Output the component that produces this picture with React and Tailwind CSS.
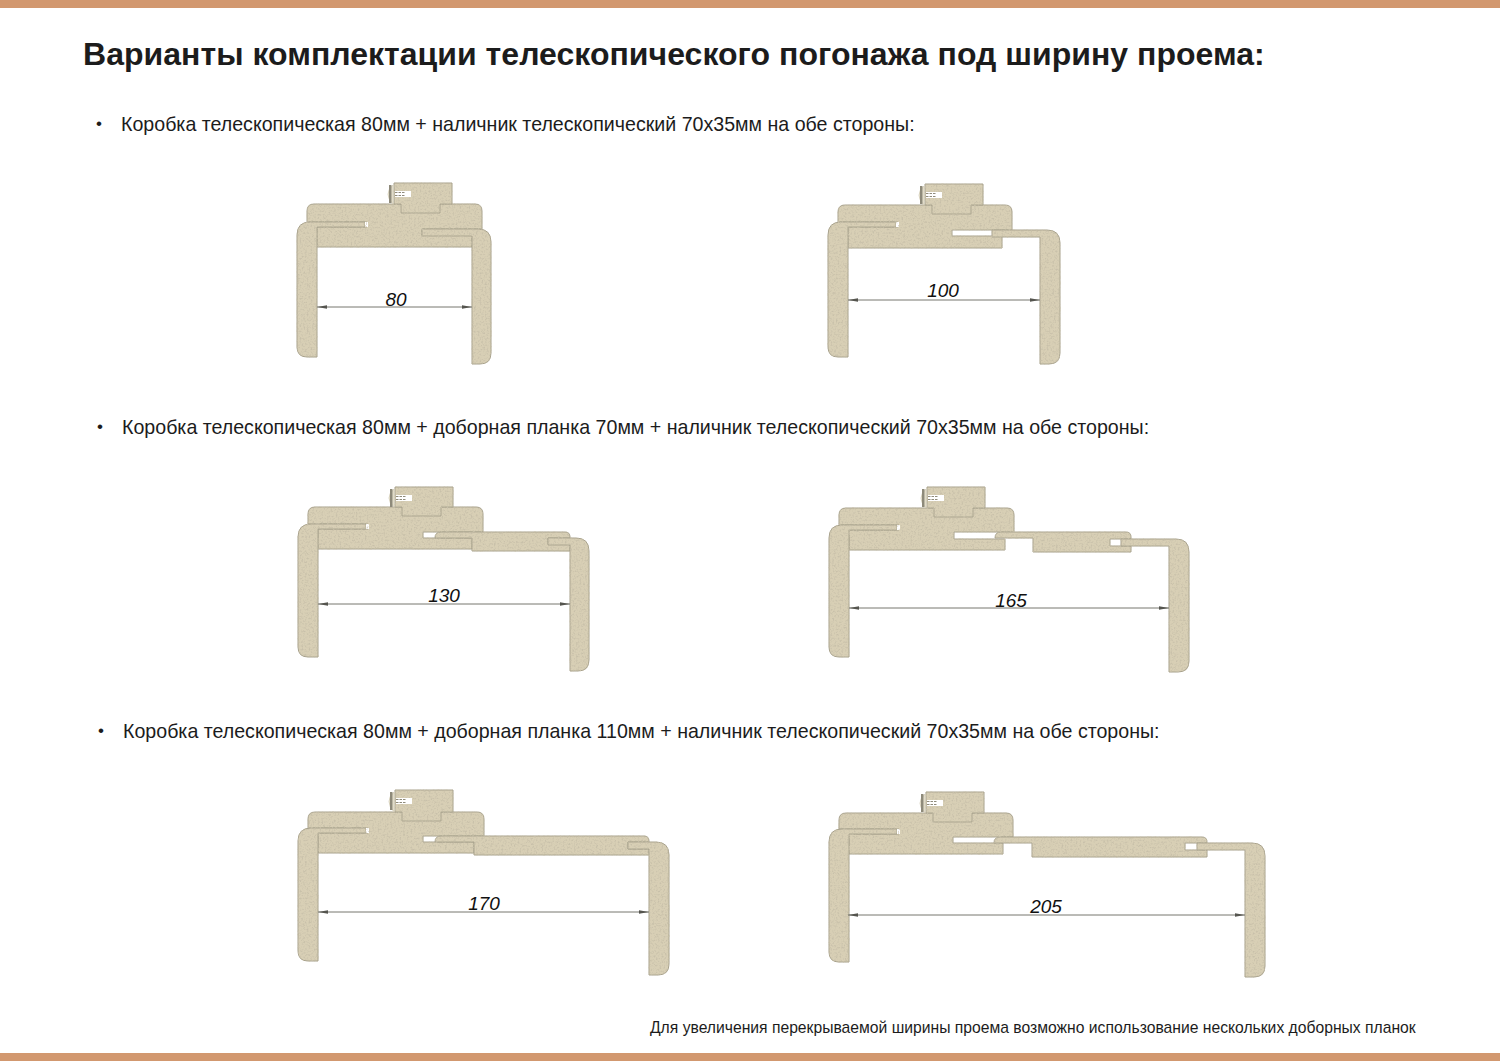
const F = '#d8cfb5';
const LINE = '#a8a28d';

// measured profile positions, all in page pixels
const rows = [
  [
    { L: 297, T: 204, fb: 247, frb: 472, fr: 482, sx: 422, sy: 229, sb: 235, stopX: 394, stopY: 183, lt: 222, lb: 357,
      c: { tx: 422, inner: 472, outer: 491, rt: 229, rb: 364 },
      arrow: { y: 307, x1: 317, x2: 472 }, label: { x: 396, y: 306, t: '80' } },
    { L: 828, T: 205, fb: 248, frb: 1002, fr: 1012, sx: 952, sy: 230, sb: 236, stopX: 925, stopY: 184, lt: 222, lb: 357,
      c: { tx: 992, inner: 1040, outer: 1060, rt: 230, rb: 364 },
      arrow: { y: 300, x1: 848, x2: 1040 }, label: { x: 943, y: 297, t: '100' } },
  ],
  [
    { L: 298, T: 507, fb: 549, frb: 472, fr: 483, sx: 423, sy: 532, sb: 538, stopX: 395, stopY: 487, lt: 524, lb: 657,
      c: { tx: 548, inner: 570, outer: 589, rt: 538, rb: 671 },
      ext: { tip: 435, right: 570, top: 532, bottom: 551, body: 472, neck: 538, slot: 548, slotB: 544 },
      arrow: { y: 604, x1: 318, x2: 570 }, label: { x: 444, y: 602, t: '130' } },
    { L: 829, T: 508, fb: 550, frb: 1005, fr: 1014, sx: 954, sy: 532, sb: 539, stopX: 927, stopY: 487, lt: 525, lb: 657,
      c: { tx: 1121, inner: 1169, outer: 1189, rt: 539, rb: 672 },
      ext: { tip: 995, right: 1131, top: 532, bottom: 552, body: 1033, neck: 538, slot: 1110, slotB: 546 },
      arrow: { y: 608, x1: 849, x2: 1169 }, label: { x: 1011, y: 607, t: '165' } },
  ],
  [
    { L: 298, T: 812, fb: 853, frb: 474, fr: 484, sx: 423, sy: 836, sb: 842, stopX: 395, stopY: 790, lt: 828, lb: 961,
      c: { tx: 628, inner: 649, outer: 669, rt: 842, rb: 975 },
      ext: { tip: 435, right: 649, top: 836, bottom: 855, body: 474, neck: 842, slot: 628, slotB: 849 },
      arrow: { y: 912, x1: 318, x2: 649 }, label: { x: 484, y: 910, t: '170' } },
    { L: 829, T: 813, fb: 854, frb: 1003, fr: 1013, sx: 953, sy: 837, sb: 843, stopX: 926, stopY: 792, lt: 829, lb: 962,
      c: { tx: 1197, inner: 1245, outer: 1265, rt: 843, rb: 977 },
      ext: { tip: 994, right: 1207, top: 837, bottom: 857, body: 1032, neck: 843, slot: 1185, slotB: 850 },
      arrow: { y: 915, x1: 848, x2: 1245 }, label: { x: 1046, y: 913, t: '205' } },
  ],
];

function Profile({ d, id, x0, y0, w, h, className }) {
  const { L, T, fb, frb, fr, sx, sy, sb, stopX, stopY, lt, lb, c, ext, arrow, label } = d;
  const inner = L + 20;
  const fl = L + 10;
  const end = L + 70;

  const frame = `M${fl + 7} ${T}H${fr - 7}Q${fr} ${T} ${fr} ${T + 7}V${sy}H${sx}V${sb}H${frb}V${fb}H${inner}V${lt + 5}H${end}V${lt}H${fl}V${T + 7}Q${fl} ${T} ${fl + 7} ${T}Z`;
  const left = `M${L + 13} ${lt}H${end - 2}V${lt + 5}H${inner}V${lb}H${L + 10}Q${L} ${lb} ${L} ${lb - 10}V${lt + 13}Q${L} ${lt} ${L + 13} ${lt}Z`;
  const right = `M${c.tx} ${c.rt}H${c.outer - 13}Q${c.outer} ${c.rt} ${c.outer} ${c.rt + 13}V${c.rb - 11}Q${c.outer} ${c.rb} ${c.outer - 11} ${c.rb}H${c.inner}V${c.rt + 7}H${c.tx}Z`;
  const stop = `M${stopX} ${stopY}H${stopX + 58}V${T}H${stopX + 46}V${T + 9}H${stopX + 7}V${T}H${stopX}Z`;
  const board = ext && `M${ext.tip + 6} ${ext.top}H${ext.right - 5}Q${ext.right} ${ext.top} ${ext.right} ${ext.top + 5}V${c.rt}H${ext.slot}V${ext.slotB}H${ext.right}V${ext.bottom}H${ext.body}V${ext.neck}H${ext.tip}Q${ext.tip} ${ext.top} ${ext.tip + 6} ${ext.top}Z`;

  return (
    <svg className={className} width={w} height={h} viewBox={`${x0} ${y0} ${w} ${h}`}>
      <defs>
        <filter id={id} x="-5%" y="-5%" width="110%" height="110%">
          <feTurbulence type="fractalNoise" baseFrequency="0.55" numOctaves="2" seed="4" result="n" />
          <feColorMatrix in="n" type="matrix" values="0 0 0 0 0.58  0 0 0 0 0.53  0 0 0 0 0.4  0 0 0 3.2 -1.5" result="s" />
          <feComposite in="s" in2="SourceAlpha" operator="in" result="specks" />
          <feMerge result="m">
            <feMergeNode in="SourceGraphic" />
            <feMergeNode in="specks" />
          </feMerge>
          <feGaussianBlur in="m" stdDeviation="0.4" />
        </filter>
      </defs>
      <g filter={`url(#${id})`} fill={F} stroke={LINE} strokeWidth="1">
        <path d={frame} />
        {board && <path d={board} />}
        <path d={left} />
        <path d={right} />
        <path d={stop} />
        <rect x={end - 2} y={lt} width="3" height="5" fill="#fff" stroke="none" />
      </g>
      {/* seal and its clip, kept out of the speckle filter */}
      <path d={`M${stopX - 1} ${stopY + 2}Q${stopX - 11} ${stopY + 11} ${stopX - 1} ${T}Z`} fill="#ebe6d3" stroke="#d3cdb7" strokeWidth="0.8" />
      <rect x={stopX - 5} y={stopY + 2} width="2.5" height="18" fill="#8e8a7a" />
      <rect x={stopX + 1} y={stopY + 8} width="16" height="6" fill="#fff" />
      <path d={`M${stopX + 1} ${stopY + 9.5}H${stopX + 11}M${stopX + 1} ${stopY + 12.5}H${stopX + 11}`} stroke="#8f8b7c" strokeWidth="1.2" strokeDasharray="2.5 1" fill="none" />
      <line x1={arrow.x1} x2={arrow.x2} y1={arrow.y} y2={arrow.y} stroke="#77776f" strokeWidth="1" />
      <path d={`M${arrow.x1} ${arrow.y}l10 -1.8v3.6ZM${arrow.x2} ${arrow.y}l-10 -1.8v3.6Z`} fill="#55554f" />
      <text x={label.x} y={label.y} textAnchor="middle" fontSize="19" fontStyle="italic" fill="#111" fontFamily="'Liberation Sans', sans-serif">{label.t}</text>
    </svg>
  );
}

function Bullet({ children, className }) {
  return (
    <div className={`flex h-6 items-center text-[19.63px] leading-6 text-[#1c1c1c] ${className}`}>
      <span className="w-[25px] text-[17px]">•</span>
      <span>{children}</span>
    </div>
  );
}

function Row({ items, y0, name, className }) {
  return (
    <div className={`flex pl-[290px] ${className}`}>
      <Profile d={items[0]} id={`${name}a`} x0={290} y0={y0} w={530} h={195} className="block shrink-0" />
      <Profile d={items[1]} id={`${name}b`} x0={820} y0={y0} w={460} h={195} className="block shrink-0" />
    </div>
  );
}

export default function App() {
  return (
    <div className="flex h-[1061px] w-[1500px] flex-col overflow-hidden bg-white font-['Liberation_Sans',Arial,sans-serif]">
      <div className="h-2 shrink-0 bg-[#d2986f]" />
      <h1 className="ml-[83px] mt-[28px] text-[32px] font-bold leading-9 tracking-[0.03px] text-[#1c1c1c]">
        Варианты комплектации телескопического погонажа под ширину проема:
      </h1>

      <Bullet className="ml-[96px] mt-[40px]">Коробка телескопическая 80мм + наличник телескопический 70х35мм на обе стороны:</Bullet>
      <Row items={rows[0]} y0={175} name="r1" className="mt-[39px]" />

      <Bullet className="ml-[97px] mt-[45px]">Коробка телескопическая 80мм + доборная планка 70мм + наличник телескопический 70х35мм на обе стороны:</Bullet>
      <Row items={rows[1]} y0={480} name="r2" className="mt-[41px]" />

      <Bullet className="ml-[98px] mt-[44px]">Коробка телескопическая 80мм + доборная планка 110мм + наличник телескопический 70х35мм на обе стороны:</Bullet>
      <Row items={rows[2]} y0={785} name="r3" className="mt-[42px]" />

      <p className="ml-[650px] mt-[38px] text-[15.7px] leading-5 text-[#1c1c1c]">
        Для увеличения перекрываемой ширины проема возможно использование нескольких доборных планок
      </p>
      <div className="mt-auto h-2 shrink-0 bg-[#d2986f]" />
    </div>
  );
}
